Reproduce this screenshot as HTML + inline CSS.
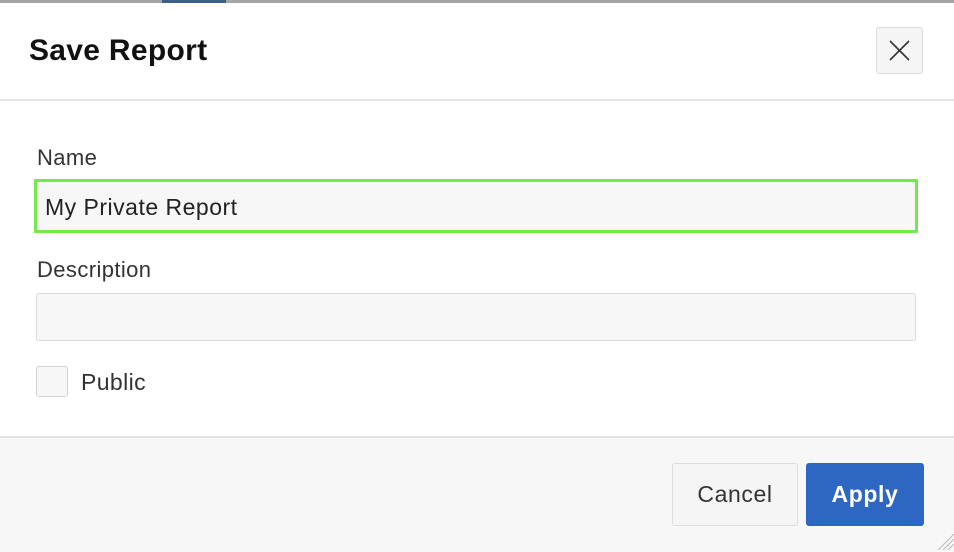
<!DOCTYPE html>
<html><head><style>
body{margin:0;width:954px;height:550px;overflow:hidden;background:#fff;font-family:"Liberation Sans",sans-serif;position:relative;color:#1f1f1f}
.top{position:absolute;left:0;top:0;width:954px;height:3px;background:#a6a6a6}
.topb{position:absolute;left:162px;top:0;width:64px;height:3px;background:#3d5f8c}
.h{position:absolute;left:29px;top:34px;font-size:30px;font-weight:bold;color:#111;letter-spacing:0.3px}
.x{position:absolute;left:876px;top:27px;width:47px;height:47px;box-sizing:border-box;border:1px solid #ddd;border-radius:3px;background:#f5f5f5}
.hl{position:absolute;left:0;top:99px;width:954px;height:2px;background:#e4e4e4}
.lbl{position:absolute;left:37px;font-size:22px;letter-spacing:0.4px;color:#333}
.in{position:absolute;box-sizing:border-box;background:#f7f7f7;border-radius:3px}
.foot{position:absolute;left:0;top:436px;width:954px;height:114px;background:#f7f7f7;border-top:2px solid #e2e2e2}
.btn{position:absolute;top:463px;height:63px;box-sizing:border-box;border-radius:3px;font-size:23px;letter-spacing:0.6px;display:flex;align-items:center;justify-content:center}
</style></head><body>
<div class="top"></div><div class="topb"></div>
<div class="h">Save Report</div>
<div class="x"><svg width="45" height="45" viewBox="0 0 45 45"><path d="M13 13L32 32M32 13L13 32" stroke="#333" stroke-width="1.6"/></svg></div>
<div class="hl"></div>
<div class="lbl" style="top:145px">Name</div>
<div class="in" style="left:34px;top:179px;width:884px;height:54px;border:3px solid #72ea4c;border-radius:1px;font-size:23px;letter-spacing:0.5px;color:#222;padding:12px 0 0 8px">My Private Report</div>
<div class="lbl" style="top:257px">Description</div>
<div class="in" style="left:36px;top:293px;width:880px;height:48px;border:1px solid #dcdcdc"></div>
<div class="in" style="left:36px;top:366px;width:32px;height:31px;border:1px solid #d4d4d4"></div>
<div class="lbl" style="left:81px;top:369px;font-size:23px">Public</div>
<div class="foot"></div>
<div class="btn" style="left:672px;width:126px;border:1px solid #ddd;background:#f5f5f5;color:#333">Cancel</div>
<div class="btn" style="left:806px;width:118px;background:#2e67c2;color:#fff;font-weight:bold">Apply</div>
<svg style="position:absolute;left:934px;top:530px" width="20" height="20"><path d="M4 20L20 4M9 20L20 9M14 20L20 14" stroke="#bbb" stroke-width="1"/></svg>
</body></html>
